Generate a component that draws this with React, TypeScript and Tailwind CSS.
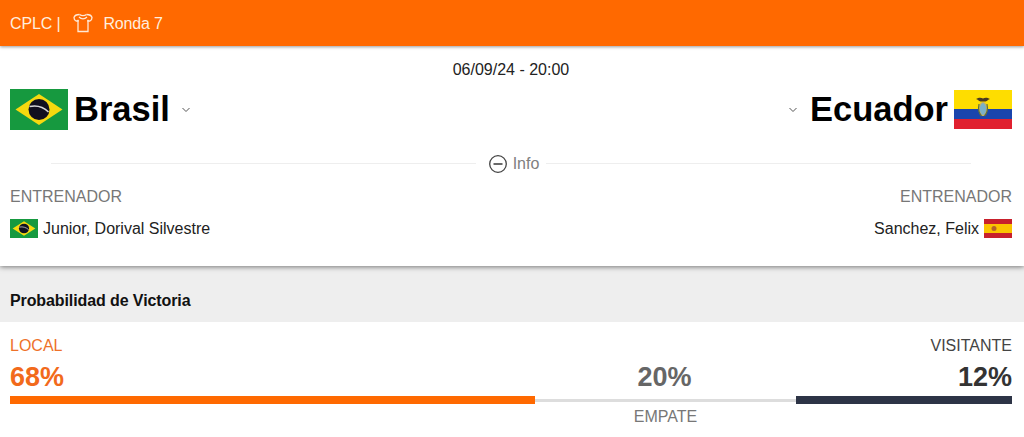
const font = "font-['Liberation_Sans',Arial,sans-serif]"

function BrazilFlag({ className }: { className: string }) {
  return (
    <svg viewBox="0 0 58 41" preserveAspectRatio="none" className={className} aria-hidden="true">
      <rect width="58" height="41" fill="#16993f" />
      <path d="M5.500 20.500 29 5l23.500 15.500L29 36z" fill="#f6d90f" />
      <circle cx="29" cy="20.500" r="10.500" fill="#10101f" />
      <path d="M19.500 17.500c7-1.500 14 .5 19 5.500" fill="none" stroke="#d8d8d8" strokeWidth="1.600" />
    </svg>
  )
}

function EcuadorFlag({ className }: { className: string }) {
  return (
    <svg viewBox="0 0 58 39" preserveAspectRatio="none" className={className} aria-hidden="true">
      <rect width="58" height="20" fill="#fedd00" />
      <rect y="19" width="58" height="10" fill="#1a45ad" />
      <rect y="29" width="58" height="10" fill="#e0202f" />
      <path d="M22 9c3-2 5.500-1.500 7-.5 1.500-1 4-1.500 7 .5-2 .5-2.500 2-4.500 2.500h-5C24.500 11 24 9.500 22 9z" fill="#4a3b20" />
      <ellipse cx="29" cy="19" rx="3.800" ry="6.500" fill="#7ab0c8" stroke="#c8b060" strokeWidth="1.200" />
      <path d="M25 14c-1 5-.5 9 2.500 12M33 14c1 5 .5 9-2.500 12" fill="none" stroke="#5a7040" strokeWidth="1.200" />
    </svg>
  )
}

function SpainFlag({ className }: { className: string }) {
  return (
    <svg viewBox="0 0 28 19" preserveAspectRatio="none" className={className} aria-hidden="true">
      <rect width="28" height="19" fill="#c8202c" />
      <rect y="5" width="28" height="9" fill="#fbc400" />
      <circle cx="10" cy="9.500" r="2.500" fill="#b5642a" />
    </svg>
  )
}

function Shirt() {
  return (
    <svg viewBox="0 0 20 20" className="block h-[20px] w-[20px] text-[#ffe9d6]" fill="none" stroke="currentColor" strokeWidth="1.300" aria-hidden="true">
      <path d="M6.500 1.500C3.500 1.500 1.500 2.500 1 4.500c0 1.700.7 3 2 3.500h2V6.800M13.500 1.500c3 0 5 1 5.500 3 0 1.700-.7 3-2 3.500h-2V6.800" />
      <path d="M6.500 1.500c1 .8 2.200 1.200 3.500 1.200s2.500-.4 3.500-1.200" />
      <path d="M6 4c1.200 1.200 2.600 1.800 4 1.800S12.800 5.200 14 4" />
      <path d="M5 7v11.500h10V7" />
    </svg>
  )
}

function Chevron() {
  return (
    <svg viewBox="0 0 10 6" className="block h-[6px] w-[10px] text-[#555]" fill="none" stroke="currentColor" strokeWidth="1" aria-hidden="true">
      <path d="M1.500 1 5 4.500 8.500 1" />
    </svg>
  )
}

export default function App() {
  return (
    <div className={`h-[437px] w-[1024px] overflow-hidden bg-white ${font}`}>
      <header className="relative z-20 flex h-[46px] items-center bg-[#ff6900] pl-[10px] text-[16px] text-[#ffeede] shadow-[0_1px_3px_rgba(0,0,0,0.4)]">
        <span className="pt-[2px] tracking-[-0.15px]">CPLC |</span>
        <span className="ml-[13px]"><Shirt /></span>
        <span className="ml-[10px] pt-[2px] tracking-[-0.15px]">Ronda 7</span>
      </header>

      <section className="relative z-10 h-[220px] bg-white pl-[10px] pr-[12px] shadow-[0_1px_5px_rgba(0,0,0,0.5)]">
        <div className="pt-[15px] text-center text-[16px] leading-[18px] text-[#222]">06/09/24 - 20:00</div>
        <div className="mt-[9px] flex h-[43px] items-center justify-between">
          <div className="flex items-center">
            <BrazilFlag className="h-[41px] w-[58px]" />
            <span className="ml-[6px] text-[34.5px] font-bold leading-none text-black">Brasil</span>
            <span className="ml-[11px]"><Chevron /></span>
          </div>
          <div className="flex items-center">
            <span className="mr-[12px]"><Chevron /></span>
            <span className="mr-[6px] text-[34.5px] font-bold leading-none text-black">Ecuador</span>
            <EcuadorFlag className="h-[39px] w-[58px]" />
          </div>
        </div>

        <div className="ml-[41px] mr-[41px] mt-[20px] flex h-[24px] items-center">
          <div className="h-px flex-1 bg-[#eee]" />
          <div className="flex items-center gap-[5px] pl-[12px] pr-[7px] text-[16px] text-[#808080]">
            <svg viewBox="0 0 20 20" className="mt-[1px] block h-[20px] w-[20px] text-[#444]" fill="none" stroke="currentColor" strokeWidth="1.300" aria-hidden="true">
              <circle cx="10" cy="10" r="8.300" />
              <path d="M5.500 10h9" strokeWidth="1.600" />
            </svg>
            <span className="pt-[2px]">Info</span>
          </div>
          <div className="h-px flex-1 bg-[#eee]" />
        </div>

        <div className="mt-[12px] flex justify-between">
          <div>
            <div className="text-[16px] leading-[20px] text-[#777]">ENTRENADOR</div>
            <div className="mt-[11px] flex items-center gap-[5px] text-[16px] leading-[20px] text-[#222]">
              <BrazilFlag className="h-[19px] w-[28px]" />
              <span className="pt-[1px]">Junior, Dorival Silvestre</span>
            </div>
          </div>
          <div className="flex flex-col items-end">
            <div className="text-[16px] leading-[20px] text-[#777]">ENTRENADOR</div>
            <div className="mt-[11px] flex items-center gap-[5px] text-[16px] leading-[20px] text-[#222]">
              <span className="pt-[1px]">Sanchez, Felix</span>
              <SpainFlag className="h-[19px] w-[28px]" />
            </div>
          </div>
        </div>
      </section>

      <div className="flex h-[56px] items-center bg-[#eeeeee] pl-[10px] pt-[14px] text-[16px] font-bold tracking-[-0.1px] text-[#111]">
        Probabilidad de Victoria
      </div>

      <section className="pl-[10px] pr-[12px] pt-[15px]">
        <div className="flex items-end justify-between text-[16px] leading-[18px]">
          <span className="text-[#ee7129]">LOCAL</span>
          <span className="text-[#444]">VISITANTE</span>
        </div>
        <div className="mt-[6px] grid grid-cols-[525px_261px_1fr] text-[27px] font-bold leading-[32px]">
          <span className="text-[#f26a1b]">68%</span>
          <span className="pr-[2px] text-center text-[#666]">20%</span>
          <span className="text-right text-[#333]">12%</span>
        </div>
        <div className="mt-[3px] grid h-[8px] grid-cols-[525px_261px_1fr] items-center">
          <div className="h-[8px] bg-[#ff6900]" />
          <div className="h-[3px] bg-[#ddd]" />
          <div className="h-[8px] bg-[#2d3446]" />
        </div>
        <div className="mt-[2px] grid grid-cols-[525px_261px_1fr] text-[16px] leading-[20px] text-[#777]">
          <span className="col-start-2 pt-[1px] text-center">EMPATE</span>
        </div>
      </section>
    </div>
  )
}
